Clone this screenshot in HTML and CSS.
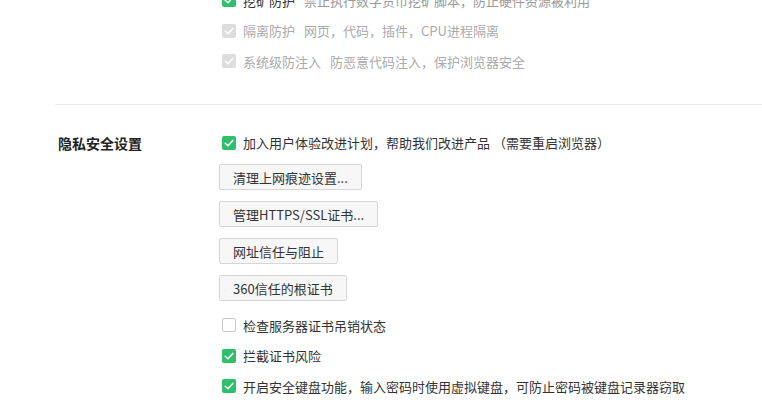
FILE: index.html
```html
<!DOCTYPE html>
<html lang="zh-CN">
<head>
<meta charset="utf-8">
<link rel="stylesheet" href="styles.css">
</head>
<body>
<div class="page">
  <section class="section first">
    <div class="title"></div>
    <div class="content">
      <div class="row">
        <span class="cb on"><svg viewBox="0 0 14 14"><path d="M3.2 7.2 L6 9.8 L10.8 4.4" /></svg></span>
        <span class="label">挖矿防护</span><span class="desc">禁止执行数字货币挖矿脚本，防止硬件资源被利用</span>
      </div>
      <div class="row disabled">
        <span class="cb dis"><svg viewBox="0 0 14 14"><path d="M3.2 7.2 L6 9.8 L10.8 4.4" /></svg></span>
        <span class="label">隔离防护</span><span class="desc">网页，代码，插件，CPU进程隔离</span>
      </div>
      <div class="row disabled">
        <span class="cb dis"><svg viewBox="0 0 14 14"><path d="M3.2 7.2 L6 9.8 L10.8 4.4" /></svg></span>
        <span class="label">系统级防注入</span><span class="desc">防恶意代码注入，保护浏览器安全</span>
      </div>
    </div>
  </section>
  <div class="divider"></div>
  <section class="section second">
    <div class="title">隐私安全设置</div>
    <div class="content">
      <div class="row">
        <span class="cb on"><svg viewBox="0 0 14 14"><path d="M3.2 7.2 L6 9.8 L10.8 4.4" /></svg></span>
        <span class="label">加入用户体验改进计划，帮助我们改进产品 （需要重启浏览器）</span>
      </div>
      <div class="buttons">
        <button class="btn">清理上网痕迹设置...</button>
        <button class="btn">管理HTTPS/SSL证书...</button>
        <button class="btn">网址信任与阻止</button>
        <button class="btn">360信任的根证书</button>
      </div>
      <div class="row">
        <span class="cb off"></span>
        <span class="label">检查服务器证书吊销状态</span>
      </div>
      <div class="row">
        <span class="cb on"><svg viewBox="0 0 14 14"><path d="M3.2 7.2 L6 9.8 L10.8 4.4" /></svg></span>
        <span class="label">拦截证书风险</span>
      </div>
      <div class="row">
        <span class="cb on"><svg viewBox="0 0 14 14"><path d="M3.2 7.2 L6 9.8 L10.8 4.4" /></svg></span>
        <span class="label">开启安全键盘功能，输入密码时使用虚拟键盘，可防止密码被键盘记录器窃取</span>
      </div>
    </div>
  </section>
</div>
</body>
</html>
```
FILE: styles.css
```css
html, body {
  margin: 0;
  padding: 0;
  background: #ffffff;
  overflow: hidden;
}
body {
  font-family: "Noto Sans CJK SC", "Microsoft YaHei", sans-serif;
  font-size: 13px;
  color: #333333;
}
.page {
  width: 762px;
  height: 407px;
  overflow: hidden;
}
.section {
  display: flex;
  padding-left: 58px;
}
.section.first {
  margin-top: -15px;
  padding-bottom: 27px;
}
.section.second {
  padding-top: 23px;
}
.title {
  width: 161px;
  flex: none;
  font-size: 14px;
  font-weight: bold;
  color: #222222;
  line-height: 30.5px;
}
.content {
  display: flex;
  flex-direction: column;
}
.row {
  height: 30.5px;
  display: flex;
  align-items: center;
  padding-left: 3px;
  white-space: nowrap;
  line-height: 1;
}
.cb {
  width: 14px;
  height: 14px;
  box-sizing: border-box;
  border-radius: 2px;
  margin-right: 7px;
  flex: none;
  display: flex;
  align-items: center;
  justify-content: center;
}
.cb svg {
  width: 14px;
  height: 14px;
}
.cb svg path {
  fill: none;
  stroke: #ffffff;
  stroke-width: 1.5;
  stroke-linecap: round;
  stroke-linejoin: round;
}
.cb.on {
  background: #2fbf6b;
}
.cb.dis {
  background: #dddddd;
}
.cb.off {
  background: #ffffff;
  border: 1px solid #c8c8c8;
}
.label {
  color: #333333;
}
.desc {
  color: #999999;
  margin-left: 9px;
}
.row.disabled .label,
.row.disabled .desc {
  color: #aaaaaa;
}
.divider {
  margin-left: 55px;
  border-top: 1px solid #ededed;
}
.buttons {
  display: flex;
  flex-direction: column;
  align-items: flex-start;
  gap: 11px;
  padding-top: 6px;
  padding-bottom: 9px;
}
.btn {
  font-family: inherit;
  font-size: 13px;
  color: #333333;
  height: 26px;
  padding: 0 13px;
  background: #f7f7f7;
  border: 1px solid #d6d6d6;
  border-radius: 2px;
  line-height: 1;
  cursor: pointer;
}
```
